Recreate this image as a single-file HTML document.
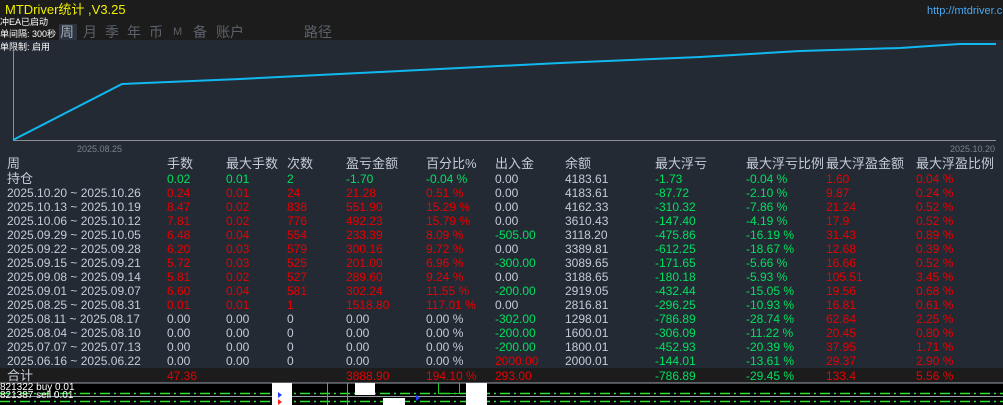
<!DOCTYPE html><html><head><meta charset="utf-8"><style>
body{margin:0;width:1003px;height:405px;overflow:hidden;background:#242a33;font-family:"Liberation Sans","Noto Sans CJK SC",sans-serif;position:relative}
.a{position:absolute;white-space:nowrap;font-size:12px;line-height:14px}
.g{color:#c4ccd8}.G{color:#00e060}.R{color:#e80000}.w{color:#e0e0e0}
.row{position:absolute;left:0;width:1003px;height:14px;font-size:12px;line-height:14px}
.row span{position:absolute;white-space:nowrap}
.c0{left:7px}.c1{left:167px}.c2{left:226px}.c3{left:287px}.c4{left:346px}.c5{left:426px}.c6{left:495px}.c7{left:565px}.c8{left:655px}.c9{left:746px}.c10{left:826px}.c11{left:916px}
</style></head><body>
<div style="position:absolute;left:0;top:0;width:1003px;height:40px;background:#1c1c1c"></div>
<div class="a" style="left:5px;top:3px;color:#f0f000;font-size:13px">MTDriver统计 ,V3.25</div>
<div class="a" style="left:927px;top:4px;color:#4aa8f0;font-size:11px">http://mtdriver.cn</div>
<div class="a" style="left:0;top:15px;color:#fff;font-size:9px">冲EA已启动</div>
<div class="a" style="left:0;top:27px;color:#fff;font-size:9px">单间隔: 300秒</div>
<div style="position:absolute;left:59px;top:24px;width:18px;height:16px;background:#2c3440"></div>
<div class="a" style="left:60px;top:24px;color:#a0a8b4;font-size:14px;line-height:16px;word-spacing:0">周</div>
<div class="a" style="left:83px;top:24px;color:#5c626c;font-size:14px;line-height:16px">月</div>
<div class="a" style="left:105px;top:24px;color:#5c626c;font-size:14px;line-height:16px">季</div>
<div class="a" style="left:127px;top:24px;color:#5c626c;font-size:14px;line-height:16px">年</div>
<div class="a" style="left:149px;top:24px;color:#5c626c;font-size:14px;line-height:16px">币</div>
<div class="a" style="left:173px;top:25px;color:#5c626c;font-size:11px">M</div>
<div class="a" style="left:193px;top:24px;color:#5c626c;font-size:14px;line-height:16px">备</div>
<div class="a" style="left:216px;top:24px;color:#5c626c;font-size:14px;line-height:16px">账户</div>
<div class="a" style="left:304px;top:24px;color:#5c626c;font-size:14px;line-height:16px">路径</div>
<div class="a" style="left:0;top:40px;color:#fff;font-size:9px">单限制: 启用</div>
<svg style="position:absolute;left:0;top:0" width="1003" height="160">
<line x1="13.5" y1="44" x2="13.5" y2="141" stroke="#8a8f96"/>
<line x1="13" y1="140.5" x2="996" y2="140.5" stroke="#8a8f96"/>
<polyline points="13,140 122,84 240,79 400,71 560,63 700,57 800,51 900,48 960,44 996,44" fill="none" stroke="#10b8f0" stroke-width="2"/>
</svg>
<div class="a" style="left:77px;top:142px;color:#7c828a;font-size:9px">2025.08.25</div>
<div class="a" style="left:950px;top:142px;color:#7c828a;font-size:9px">2025.10.20</div>
<div class="row g" style="top:157px;font-size:13px"><span class="c0">周</span><span class="c1">手数</span><span class="c2">最大手数</span><span class="c3">次数</span><span class="c4">盈亏金额</span><span class="c5">百分比%</span><span class="c6">出入金</span><span class="c7">余额</span><span class="c8">最大浮亏</span><span class="c9">最大浮亏比例</span><span class="c10">最大浮盈金额</span><span class="c11">最大浮盈比例</span></div>
<div class="row" style="top:172px"><span class="c0 g" style="font-size:13px">持仓</span><span class="c1 G">0.02</span><span class="c2 G">0.01</span><span class="c3 G">2</span><span class="c4 G">-1.70</span><span class="c5 G">-0.04 %</span><span class="c6 g">0.00</span><span class="c7 g">4183.61</span><span class="c8 G">-1.73</span><span class="c9 G">-0.04 %</span><span class="c10 R">1.60</span><span class="c11 R">0.04 %</span></div>
<div class="row" style="top:186px"><span class="c0 g">2025.10.20 ~ 2025.10.26</span><span class="c1 R">0.24</span><span class="c2 R">0.01</span><span class="c3 R">24</span><span class="c4 R">21.28</span><span class="c5 R">0.51 %</span><span class="c6 g">0.00</span><span class="c7 g">4183.61</span><span class="c8 G">-87.72</span><span class="c9 G">-2.10 %</span><span class="c10 R">9.87</span><span class="c11 R">0.24 %</span></div>
<div class="row" style="top:200px"><span class="c0 g">2025.10.13 ~ 2025.10.19</span><span class="c1 R">8.47</span><span class="c2 R">0.02</span><span class="c3 R">838</span><span class="c4 R">551.90</span><span class="c5 R">15.29 %</span><span class="c6 g">0.00</span><span class="c7 g">4162.33</span><span class="c8 G">-310.32</span><span class="c9 G">-7.86 %</span><span class="c10 R">21.24</span><span class="c11 R">0.52 %</span></div>
<div class="row" style="top:214px"><span class="c0 g">2025.10.06 ~ 2025.10.12</span><span class="c1 R">7.81</span><span class="c2 R">0.02</span><span class="c3 R">776</span><span class="c4 R">492.23</span><span class="c5 R">15.79 %</span><span class="c6 g">0.00</span><span class="c7 g">3610.43</span><span class="c8 G">-147.40</span><span class="c9 G">-4.19 %</span><span class="c10 R">17.9</span><span class="c11 R">0.52 %</span></div>
<div class="row" style="top:228px"><span class="c0 g">2025.09.29 ~ 2025.10.05</span><span class="c1 R">6.48</span><span class="c2 R">0.04</span><span class="c3 R">554</span><span class="c4 R">233.39</span><span class="c5 R">8.09 %</span><span class="c6 G">-505.00</span><span class="c7 g">3118.20</span><span class="c8 G">-475.86</span><span class="c9 G">-16.19 %</span><span class="c10 R">31.43</span><span class="c11 R">0.89 %</span></div>
<div class="row" style="top:242px"><span class="c0 g">2025.09.22 ~ 2025.09.28</span><span class="c1 R">6.20</span><span class="c2 R">0.03</span><span class="c3 R">579</span><span class="c4 R">300.16</span><span class="c5 R">9.72 %</span><span class="c6 g">0.00</span><span class="c7 g">3389.81</span><span class="c8 G">-612.25</span><span class="c9 G">-18.67 %</span><span class="c10 R">12.68</span><span class="c11 R">0.39 %</span></div>
<div class="row" style="top:256px"><span class="c0 g">2025.09.15 ~ 2025.09.21</span><span class="c1 R">5.72</span><span class="c2 R">0.03</span><span class="c3 R">525</span><span class="c4 R">201.00</span><span class="c5 R">6.96 %</span><span class="c6 G">-300.00</span><span class="c7 g">3089.65</span><span class="c8 G">-171.65</span><span class="c9 G">-5.66 %</span><span class="c10 R">16.66</span><span class="c11 R">0.52 %</span></div>
<div class="row" style="top:270px"><span class="c0 g">2025.09.08 ~ 2025.09.14</span><span class="c1 R">5.81</span><span class="c2 R">0.02</span><span class="c3 R">527</span><span class="c4 R">289.60</span><span class="c5 R">9.24 %</span><span class="c6 g">0.00</span><span class="c7 g">3188.65</span><span class="c8 G">-180.18</span><span class="c9 G">-5.93 %</span><span class="c10 R">105.51</span><span class="c11 R">3.45 %</span></div>
<div class="row" style="top:284px"><span class="c0 g">2025.09.01 ~ 2025.09.07</span><span class="c1 R">6.60</span><span class="c2 R">0.04</span><span class="c3 R">581</span><span class="c4 R">302.24</span><span class="c5 R">11.55 %</span><span class="c6 G">-200.00</span><span class="c7 g">2919.05</span><span class="c8 G">-432.44</span><span class="c9 G">-15.05 %</span><span class="c10 R">19.56</span><span class="c11 R">0.68 %</span></div>
<div class="row" style="top:298px"><span class="c0 g">2025.08.25 ~ 2025.08.31</span><span class="c1 R">0.01</span><span class="c2 R">0.01</span><span class="c3 R">1</span><span class="c4 R">1518.80</span><span class="c5 R">117.01 %</span><span class="c6 g">0.00</span><span class="c7 g">2816.81</span><span class="c8 G">-296.25</span><span class="c9 G">-10.93 %</span><span class="c10 R">16.81</span><span class="c11 R">0.61 %</span></div>
<div class="row" style="top:312px"><span class="c0 g">2025.08.11 ~ 2025.08.17</span><span class="c1 g">0.00</span><span class="c2 g">0.00</span><span class="c3 g">0</span><span class="c4 g">0.00</span><span class="c5 g">0.00 %</span><span class="c6 G">-302.00</span><span class="c7 g">1298.01</span><span class="c8 G">-786.89</span><span class="c9 G">-28.74 %</span><span class="c10 R">62.84</span><span class="c11 R">2.25 %</span></div>
<div class="row" style="top:326px"><span class="c0 g">2025.08.04 ~ 2025.08.10</span><span class="c1 g">0.00</span><span class="c2 g">0.00</span><span class="c3 g">0</span><span class="c4 g">0.00</span><span class="c5 g">0.00 %</span><span class="c6 G">-200.00</span><span class="c7 g">1600.01</span><span class="c8 G">-306.09</span><span class="c9 G">-11.22 %</span><span class="c10 R">20.45</span><span class="c11 R">0.80 %</span></div>
<div class="row" style="top:340px"><span class="c0 g">2025.07.07 ~ 2025.07.13</span><span class="c1 g">0.00</span><span class="c2 g">0.00</span><span class="c3 g">0</span><span class="c4 g">0.00</span><span class="c5 g">0.00 %</span><span class="c6 G">-200.00</span><span class="c7 g">1800.01</span><span class="c8 G">-452.93</span><span class="c9 G">-20.39 %</span><span class="c10 R">37.95</span><span class="c11 R">1.71 %</span></div>
<div class="row" style="top:354px"><span class="c0 g">2025.06.16 ~ 2025.06.22</span><span class="c1 g">0.00</span><span class="c2 g">0.00</span><span class="c3 g">0</span><span class="c4 g">0.00</span><span class="c5 g">0.00 %</span><span class="c6 R">2000.00</span><span class="c7 g">2000.01</span><span class="c8 G">-144.01</span><span class="c9 G">-13.61 %</span><span class="c10 R">29.37</span><span class="c11 R">2.90 %</span></div>
<div style="position:absolute;left:0;top:368px;width:1003px;height:15px;background:#1c1c1c"></div>
<div class="row" style="top:369px"><span class="c0 g" style="font-size:13px">合计</span><span class="c1 R">47.36</span><span class="c4 R">3888.90</span><span class="c5 R">194.10 %</span><span class="c6 R">293.00</span><span class="c8 G">-786.89</span><span class="c9 G">-29.45 %</span><span class="c10 R">133.4</span><span class="c11 R">5.56 %</span></div>
<div style="position:absolute;left:0;top:383px;width:1003px;height:22px;background:#000"></div>
<svg style="position:absolute;left:0;top:382px" width="1003" height="23">
<line x1="0" y1="1" x2="1003" y2="1" stroke="#9aa0a8"/>
<line x1="0" y1="14.5" x2="1003" y2="14.5" stroke="#9aa0a8"/>
<line x1="0" y1="11.5" x2="1003" y2="11.5" stroke="#30e030" stroke-width="1.6" stroke-dasharray="10,4,2,4"/>
<line x1="0" y1="19.5" x2="1003" y2="19.5" stroke="#30e030" stroke-width="1.6" stroke-dasharray="10,4,2,4"/>
<rect x="272" y="1" width="20" height="22" fill="#fff"/>
<rect x="355" y="1" width="20" height="12" fill="#fff"/>
<rect x="383" y="16" width="22" height="7" fill="#fff"/>
<rect x="466" y="1" width="21" height="22" fill="#fff"/>
<line x1="327.5" y1="1" x2="327.5" y2="23" stroke="#20d020"/>
<line x1="347.5" y1="1" x2="347.5" y2="23" stroke="#20d020"/>
<line x1="438.5" y1="1" x2="438.5" y2="12" stroke="#20d020"/>
<line x1="459.5" y1="1" x2="459.5" y2="12" stroke="#20d020"/>
<line x1="438" y1="11.5" x2="460" y2="11.5" stroke="#20d020"/>
<path d="M278 10l4 3-4 3z" fill="#2040ff"/><path d="M278 17l4 3-4 3z" fill="#ff2020"/>
<path d="M416 13l4 3-4 3z" fill="#2040ff"/>
</svg>
<div class="a" style="left:0;top:383px;color:#fff;font-size:10px;line-height:10px">821322 buy 0.01</div>
<div class="a" style="left:0;top:391px;color:#fff;font-size:10px;line-height:10px">821387 sell 0.01</div>
</body></html>
